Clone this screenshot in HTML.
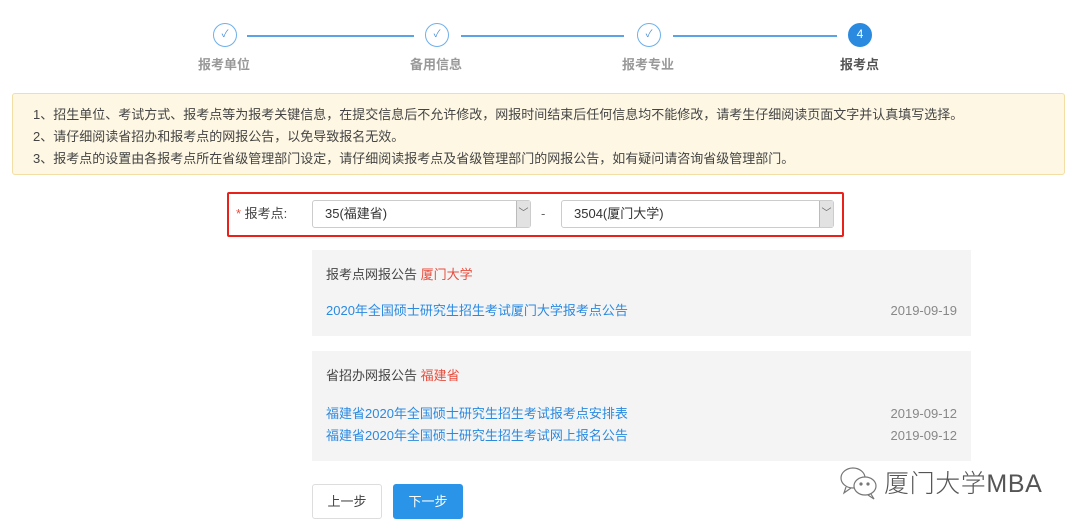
<!DOCTYPE html>
<html><head><meta charset="utf-8"><style>
*{margin:0;padding:0;box-sizing:border-box}
body{width:1080px;height:527px;background:#fff;font-family:"Liberation Sans","Noto Sans CJK SC",sans-serif;font-size:13px;color:#555;position:relative;overflow:hidden}
.abs{position:absolute}
.circ{position:absolute;width:24px;height:24px;border:1.5px solid #6eb0ea;border-radius:50%;color:#4a90d9;font-size:10px;text-align:center;line-height:21px;background:#fff}
.line{position:absolute;height:1.5px;background:#5aa3e6;top:35px}
.lbl{position:absolute;top:54px;font-size:13px;font-weight:bold;color:#999}
.note{position:absolute;left:12px;top:93px;width:1053px;height:82px;background:#fdf7e3;border:1px solid #f3dea5;border-radius:3px;padding:10px 0 0 20px;font-size:13px;line-height:22px;color:#444}
.sel{position:absolute;top:200px;height:28px;border:1px solid #ccc;border-radius:3px;background:#fff;font-size:13px;color:#333;padding-left:12px;line-height:26px}
.sel i{position:absolute;right:0;top:0;width:14px;height:26px;background:#e2e2e2;border-left:1px solid #bbb;font-style:normal;font-size:10px;text-align:center;color:#666}
.box{position:absolute;left:312px;width:659px;background:#f4f4f4}
.box div{line-height:16px;height:16px}
.box .t{position:absolute;left:14px;font-size:13px;color:#444}
.red{color:#e74c3c}
.lnk{position:absolute;left:14px;font-size:13px;color:#2a8ae0}
.dt{position:absolute;right:14px;font-size:13px;color:#888}
.btn{position:absolute;top:484px;width:70px;height:35px;border-radius:3px;font-size:13px;text-align:center;line-height:33px}
</style></head><body>
<div class="line" style="left:247px;width:167px"></div>
<div class="line" style="left:461px;width:163px"></div>
<div class="line" style="left:673px;width:164px"></div>
<div class="circ" style="left:213px;top:23px">✓</div>
<div class="circ" style="left:425px;top:23px">✓</div>
<div class="circ" style="left:637px;top:23px">✓</div>
<div class="circ" style="left:848px;top:23px;background:#2a8ae0;border-color:#2a8ae0;color:#fff;font-size:12px">4</div>
<div class="lbl" style="left:198px">报考单位</div>
<div class="lbl" style="left:410px">备用信息</div>
<div class="lbl" style="left:622px">报考专业</div>
<div class="lbl" style="left:840px;color:#555">报考点</div>
<div class="note">1、招生单位、考试方式、报考点等为报考关键信息，在提交信息后不允许修改，网报时间结束后任何信息均不能修改，请考生仔细阅读页面文字并认真填写选择。<br>2、请仔细阅读省招办和报考点的网报公告，以免导致报名无效。<br>3、报考点的设置由各报考点所在省级管理部门设定，请仔细阅读报考点及省级管理部门的网报公告，如有疑问请咨询省级管理部门。</div>
<div class="abs" style="left:227px;top:192px;width:617px;height:45px;border:2px solid #e8221b;border-radius:2px"></div>
<div class="abs" style="left:236px;top:206px;font-size:13px;color:#444;line-height:16px"><span class="red">*</span> 报考点:</div>
<div class="sel" style="left:312px;width:219px">35(福建省)<i>﹀</i></div>
<div class="abs" style="left:541px;top:206px;color:#666;line-height:16px">-</div>
<div class="sel" style="left:561px;width:273px">3504(厦门大学)<i>﹀</i></div>
<div class="box" style="top:250px;height:86px">
<div class="t" style="top:17px">报考点网报公告 <span class="red">厦门大学</span></div>
<div class="lnk" style="top:53px">2020年全国硕士研究生招生考试厦门大学报考点公告</div>
<div class="dt" style="top:53px">2019-09-19</div></div>
<div class="box" style="top:351px;height:110px">
<div class="t" style="top:17px">省招办网报公告 <span class="red">福建省</span></div>
<div class="lnk" style="top:55px">福建省2020年全国硕士研究生招生考试报考点安排表</div>
<div class="dt" style="top:55px">2019-09-12</div>
<div class="lnk" style="top:77px">福建省2020年全国硕士研究生招生考试网上报名公告</div>
<div class="dt" style="top:77px">2019-09-12</div></div>
<div class="btn" style="left:312px;border:1px solid #ddd;color:#444;background:#fff">上一步</div>
<div class="btn" style="left:393px;background:#2a94e8;color:#fff;line-height:35px">下一步</div>
<svg class="abs" style="left:838px;top:465px" width="44" height="36" viewBox="0 0 44 36" fill="none" stroke="#777" stroke-width="1.2"><ellipse cx="15" cy="13" rx="12" ry="10"/><path d="M8 22 L6 28 L13 23"/><ellipse cx="27" cy="21" rx="11" ry="9" fill="#fff"/><path d="M33 29 L36 34 L30 30"/><circle cx="23" cy="19" r="1" fill="#777"/><circle cx="30" cy="19" r="1" fill="#777"/></svg>
<div class="abs" style="left:884px;top:464px;font-size:25px;color:#555;letter-spacing:0.6px;font-weight:300">厦门大学MBA</div>
</body></html>
